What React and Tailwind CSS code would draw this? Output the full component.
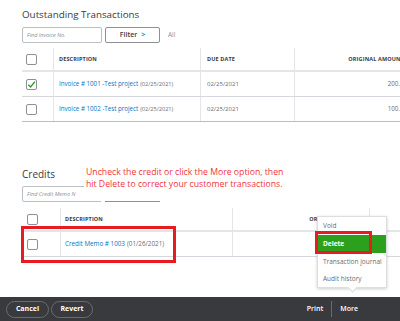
import React from 'react';

const font = { fontFamily: '"Open Sans", "Liberation Sans", sans-serif' };

const Box = ({ checked }) => (
    <span className="w-[11px] h-[11px] rounded-[2px] border border-[#8d9096] bg-white flex items-center justify-center">
        {checked && (
            <svg width="9" height="9" viewBox="0 0 10 10">
                <path d="M1.5 5.2 L4 7.8 L8.8 1.8" fill="none" stroke="#2ca01c" strokeWidth="1.6" />
            </svg>
        )}
    </span>
);

const invoices = [
    { id: 1, label: 'Invoice # 1001 -Test project', date: '02/25/2021', amount: '200.00', checked: true },
    { id: 2, label: 'Invoice # 1002 -Test project', date: '02/25/2021', amount: '100.00', checked: false },
];

const App = () => {
    return (
        <div className="w-[400px] h-[321px] bg-white flex flex-col overflow-hidden text-[#393a3d]" style={font}>
            <div className="flex-1 relative overflow-hidden pl-[22px]">
                {/* Outstanding Transactions */}
                <h1 className="text-[9.8px] leading-[14px] mt-[8px] text-[#393a3d]">Outstanding Transactions</h1>
                <div className="flex items-center mt-[5px] h-[16px]">
                    <div className="w-[80px] h-[16px] border border-[#babec5] rounded-[2px] flex items-center px-[4px] text-[5.5px] italic text-[#8d9096]">
                        Find Invoice No.
                    </div>
                    <button className="ml-[3px] w-[55px] h-[16px] border border-[#8d9096] rounded-[2px] flex items-center justify-center gap-[4px] text-[7px] font-semibold text-[#393a3d]">
                        Filter <span className="text-[#0077c5] text-[7px]">&gt;</span>
                    </button>
                    <span className="ml-[8px] text-[6.5px] text-[#8d9096]">All</span>
                </div>

                <div className="mt-[5px] w-[440px]">
                    <div className="grid grid-cols-[31px_147px_94px_168px] h-[24px] border-b-2 border-[#e3e5e8]">
                        <div className="flex items-center pl-[4px]"><Box /></div>
                        <div className="border-l border-[#e3e5e8] flex items-center pl-[5px] text-[5.5px] font-bold tracking-wide">DESCRIPTION</div>
                        <div className="border-l border-[#e3e5e8] flex items-center pl-[6px] text-[5.5px] font-bold tracking-wide">DUE DATE</div>
                        <div className="border-l border-[#e3e5e8] flex items-center justify-end pr-[58px] text-[5.5px] font-bold tracking-wide whitespace-nowrap">ORIGINAL AMOUNT</div>
                    </div>
                    {invoices.map((inv, i) => (
                        <div key={inv.id} className={`grid grid-cols-[31px_147px_94px_168px] h-[25px] border-b ${i === invoices.length - 1 ? 'border-[#babec5]' : 'border-[#d4d7dc]'}`}>
                            <div className="flex items-center pl-[4px]"><Box checked={inv.checked} /></div>
                            <div className="border-l border-[#e3e5e8] flex items-center pl-[5px] text-[6.2px] whitespace-nowrap">
                                <span className="text-[#0077c5]">{inv.label}</span>
                                <span className="ml-[2px] text-[5.6px] text-[#6b6c72]">({inv.date})</span>
                            </div>
                            <div className="border-l border-[#e3e5e8] flex items-center pl-[6px] text-[6px] text-[#6b6c72]">{inv.date}</div>
                            <div className="border-l border-[#e3e5e8] flex items-center justify-end pr-[55px] text-[6.2px] text-[#6b6c72]">{inv.amount}</div>
                        </div>
                    ))}
                </div>

                {/* Credits */}
                <h2 className="text-[10px] leading-[14px] mt-[45px]">Credits</h2>
                <div className="flex items-center mt-[5px] h-[16px]">
                    <div className="w-[80px] h-[16px] border border-[#babec5] rounded-[2px] flex items-center px-[4px] text-[5.5px] italic text-[#8d9096] whitespace-nowrap overflow-hidden">
                        Find Credit Memo N
                    </div>
                    <div className="ml-[3px] w-[55px] h-[16px] border-b border-[#8d9096]" />
                </div>

                <div className="mt-[6px] w-[440px]">
                    <div className="grid grid-cols-[38px_172px_137px_93px] h-[24px] border-b-2 border-[#e3e5e8]">
                        <div className="flex items-center pl-[5px]"><Box /></div>
                        <div className="border-l border-[#e3e5e8] flex items-center pl-[4px] text-[5.5px] font-bold tracking-wide">DESCRIPTION</div>
                        <div className="border-l border-[#e3e5e8] flex items-center justify-end pr-[4px] text-[5.5px] font-bold tracking-wide whitespace-nowrap">ORIGINAL AMOUNT</div>
                        <div className="border-l border-[#e3e5e8]" />
                    </div>
                    <div className="grid grid-cols-[38px_172px_137px_93px] h-[25px] border-b border-[#d4d7dc]">
                        <div className="flex items-center pl-[5px]"><Box /></div>
                        <div className="border-l border-[#e3e5e8] flex items-center pl-[4px] text-[6.3px] whitespace-nowrap">
                            <span className="text-[#0077c5]">Credit Memo # 1003</span>
                            <span className="ml-[2px] text-[#6b6c72]">(01/26/2021)</span>
                        </div>
                        <div className="border-l border-[#e3e5e8]" />
                        <div className="border-l border-[#e3e5e8]" />
                    </div>
                </div>

                {/* annotation text */}
                <div className="absolute left-[84px] top-[165px] w-[220px] h-[36px] bg-white px-[2px] pt-[1px] text-[8.7px] leading-[12px] text-[#f0353d]" style={{ fontFamily: '"Open Sans", sans-serif' }}>
                    Uncheck the credit or click the More option, then<br />
                    hit Delete to correct your customer transactions.
                </div>

                {/* annotation box around credit row */}
                <div className="absolute left-[21px] top-[226px] w-[155px] h-[37px] border-[3px] border-[#e81b23]" />

                {/* More menu */}
                <div className="absolute left-[317px] top-[216px] w-[70px] h-[72px] bg-white border border-[#dcdee2] shadow-[0_1px_3px_rgba(0,0,0,0.2)] text-[6.5px]">
                    <div className="h-[18px] flex items-center pl-[5px] text-[#6b6c72]">Void</div>
                    <div className="h-[18px] flex items-center pl-[5px] bg-[#2ca01c] text-white font-bold">Delete</div>
                    <div className="h-[17px] flex items-center pl-[5px] text-[#6b6c72] whitespace-nowrap">Transaction journal</div>
                    <div className="h-[17px] flex items-center pl-[5px] text-[#6b6c72]">Audit history</div>
                    <div className="absolute left-[31px] bottom-[-4px] w-[7px] h-[7px] bg-white rotate-45 border-r border-b border-[#dcdee2]" />
                </div>
                <div className="absolute left-[315px] top-[231px] w-[57px] h-[23px] border-[3px] border-[#e81b23]" />
            </div>

            {/* Footer */}
            <div className="h-[24px] bg-[#393a3d] flex items-center px-[6px] text-white text-[7px] font-bold">
                <button className="h-[17px] w-[43px] rounded-full border border-[#6b6c72] flex items-center justify-center">Cancel</button>
                <button className="ml-[2px] h-[17px] w-[42px] rounded-full border border-[#6b6c72] flex items-center justify-center">Revert</button>
                <div className="ml-auto flex items-center font-semibold">
                    <span>Print</span>
                    <span className="mx-[8px] w-px h-[16px] bg-[#6b6c72]" />
                    <span className="mr-[36px]">More</span>
                </div>
            </div>
        </div>
    );
};

export default App;
